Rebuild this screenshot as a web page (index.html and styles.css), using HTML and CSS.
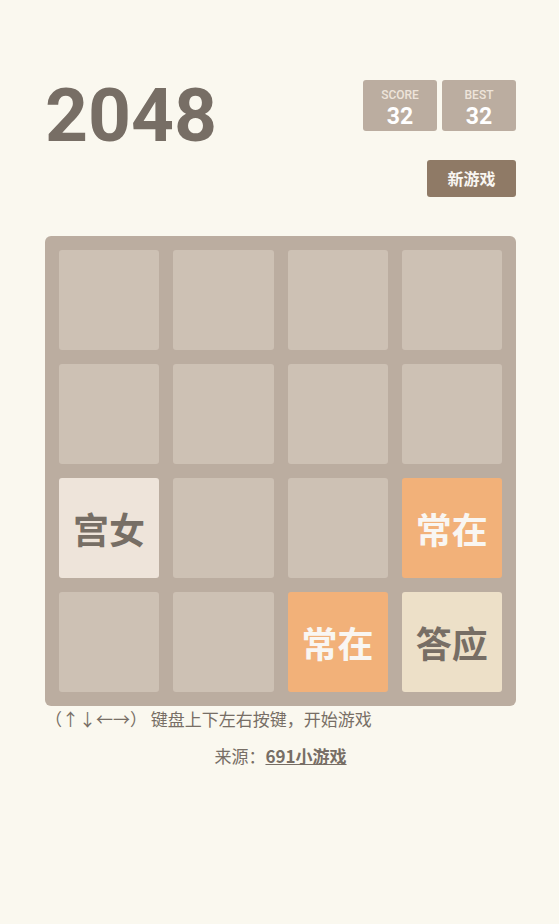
FILE: index.html
```html
<!DOCTYPE html>
<html lang="zh-CN">
<head>
<meta charset="utf-8">
<title>2048</title>
<link rel="stylesheet" href="styles.css">
</head>
<body>
<div class="page">
  <div class="header">
    <h1 class="title">2048</h1>
    <div class="side">
      <div class="scores">
        <div class="score-box"><div class="score-label">SCORE</div><div class="score-value">32</div></div>
        <div class="score-box"><div class="score-label">BEST</div><div class="score-value">32</div></div>
      </div>
      <div class="new-game">新游戏</div>
    </div>
  </div>
  <div class="board">
    <div class="cell"></div><div class="cell"></div><div class="cell"></div><div class="cell"></div>
    <div class="cell"></div><div class="cell"></div><div class="cell"></div><div class="cell"></div>
    <div class="cell tile-2">宫女</div><div class="cell"></div><div class="cell"></div><div class="cell tile-8">常在</div>
    <div class="cell"></div><div class="cell"></div><div class="cell tile-8">常在</div><div class="cell tile-4">答应</div>
  </div>
  <p class="hint">（↑↓←→） 键盘上下左右按键，开始游戏</p>
  <p class="source">来源：<a class="source-link">691小游戏</a></p>
</div>
</body>
</html>
```
FILE: styles.css
```css
html, body {
  margin: 0;
  padding: 0;
  background: #faf8ef;
}
body {
  font-family: "Noto Sans CJK SC", "Noto Sans", sans-serif;
  color: #776e65;
}
.page {
  width: 471px;
  margin-left: 45px;
  padding-top: 76px;
}
.header {
  display: flex;
  justify-content: space-between;
  align-items: flex-start;
}
.title {
  margin: 0;
  font-family: Roboto, "Liberation Sans", sans-serif;
  font-weight: 700;
  font-size: 75px;
  line-height: 78px;
  color: #776e65;
}
.side {
  margin-top: 4px;
  display: flex;
  flex-direction: column;
  align-items: flex-end;
}
.scores {
  display: flex;
  gap: 5px;
}
.score-box {
  width: 74px;
  height: 51px;
  background: #bbada0;
  border-radius: 3px;
  box-sizing: border-box;
  padding-top: 8px;
  text-align: center;
  font-family: Roboto, "Liberation Sans", sans-serif;
}
.score-label {
  font-size: 12px;
  line-height: 14px;
  font-weight: 500;
  color: #eee4da;
}
.score-value {
  margin-top: 3px;
  font-size: 23px;
  line-height: 24px;
  font-weight: 700;
  color: #ffffff;
}
.new-game {
  margin-top: 29px;
  width: 89px;
  height: 37px;
  line-height: 37px;
  text-align: center;
  background: #8f7a66;
  color: #f9f6f2;
  border-radius: 3px;
  font-weight: 700;
  font-size: 16px;
}
.board {
  margin-top: 39px;
  background: #bbada0;
  border-radius: 6px;
  padding: 14px;
  display: grid;
  grid-template-columns: repeat(4, 1fr);
  grid-auto-rows: 100px;
  gap: 14px;
}
.cell {
  background: #cdc1b4;
  border-radius: 3px;
  display: flex;
  align-items: center;
  justify-content: center;
  font-size: 36px;
  font-weight: 700;
}
.tile-2 {
  background: #eee4da;
  color: #776e65;
}
.tile-4 {
  background: #ede0c8;
  color: #776e65;
}
.tile-8 {
  background: #f2b179;
  color: #f9f6f2;
}
.hint {
  margin: 0;
  font-size: 17px;
  line-height: 26px;
}
.source {
  margin: 11px 0 0 0;
  text-align: center;
  font-size: 17px;
  line-height: 26px;
}
.source-link {
  font-weight: 700;
  text-decoration: underline;
  color: #776e65;
}
```
